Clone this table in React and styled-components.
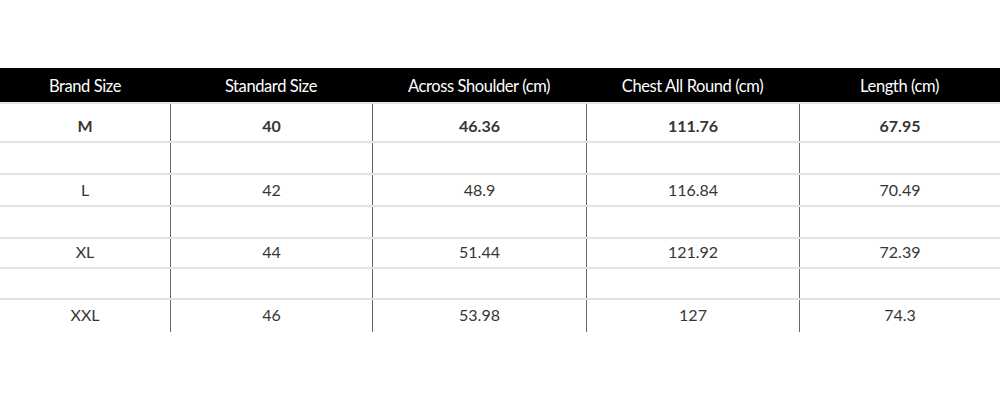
import styled, { createGlobalStyle } from "styled-components";

const GlobalStyle = createGlobalStyle`
  body {
    margin: 0;
    background: #fff;
    font-family: Lato, "Liberation Sans", sans-serif;
  }
`;

const Page = styled.div`
  width: 1000px;
  height: 400px;
  padding-top: 68px;
  box-sizing: border-box;
`;

const cols = "170px 202px 214px 213px 1fr";

const HeadRow = styled.div`
  display: grid;
  grid-template-columns: ${cols};
  height: 34px;
  background: #000;
  border-bottom: 2px solid #e4e4e4;
`;

const HeadCell = styled.div`
  display: flex;
  align-items: center;
  justify-content: center;
  color: #fff;
  font-size: 16.5px;
  padding-top: 1px;
  letter-spacing: -0.4px;
`;

const Row = styled.div`
  display: grid;
  grid-template-columns: ${cols};
  height: ${(p) => p.$h}px;
  box-sizing: border-box;
  border-top: ${(p) => (p.$first ? "none" : "2px solid #e2e2e2")};
`;

const Cell = styled.div`
  display: flex;
  align-items: center;
  justify-content: center;
  box-sizing: border-box;
  padding-top: ${(p) => p.$pt || 0}px;
  padding-bottom: ${(p) => p.$pb || 0}px;
  color: #363636;
  font-size: 16px;
  font-weight: ${(p) => (p.$bold ? 700 : 400)};
  border-left: ${(p) => (p.$edge ? "none" : "1px solid #666")};
`;

const headers = [
  "Brand Size",
  "Standard Size",
  "Across Shoulder (cm)",
  "Chest All Round (cm)",
  "Length (cm)",
];

const rows = [
  { cells: ["M", "40", "46.36", "111.76", "67.95"], bold: true, h: 37, pt: 6 },
  { cells: ["", "", "", "", ""], h: 32 },
  { cells: ["L", "42", "48.9", "116.84", "70.49"], h: 32, pb: 1 },
  { cells: ["", "", "", "", ""], h: 32 },
  { cells: ["XL", "44", "51.44", "121.92", "72.39"], h: 30, pb: 3 },
  { cells: ["", "", "", "", ""], h: 31 },
  { cells: ["XXL", "46", "53.98", "127", "74.3"], h: 34, pb: 4 },
];

export default function App() {
  return (
    <Page>
      <GlobalStyle />
      <HeadRow>
        {headers.map((h) => (
          <HeadCell key={h}>{h}</HeadCell>
        ))}
      </HeadRow>
      {rows.map((r, i) => (
        <Row key={i} $h={r.h} $first={i === 0}>
          {r.cells.map((c, j) => (
            <Cell key={j} $edge={j === 0} $bold={r.bold} $pt={r.pt} $pb={r.pb}>
              {c}
            </Cell>
          ))}
        </Row>
      ))}
    </Page>
  );
}
